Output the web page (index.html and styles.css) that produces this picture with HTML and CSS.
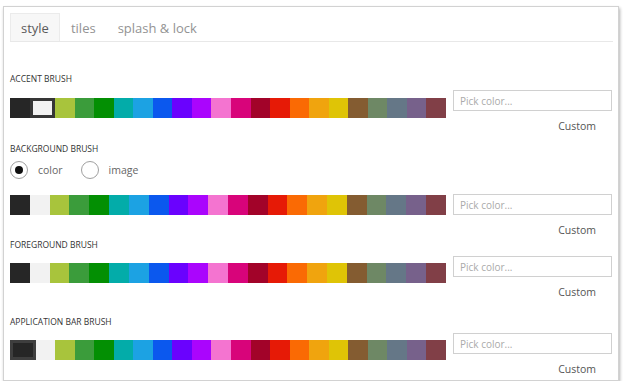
FILE: index.html
```html
<!DOCTYPE html>
<html lang="en">

<head>
    <meta charset="UTF-8">
    <meta name="viewport" content="width=device-width, initial-scale=1.0">
    <title>Theme settings</title>
    <link rel="stylesheet" href="styles.css">
</head>

<body>
    <div class="panel">
        <div class="tabs">
            <div class="tab active">style</div>
            <div class="tab">tiles</div>
            <div class="tab">splash &amp; lock</div>
        </div>

        <!-- accent -->
        <div class="brush" id="accent">
            <div class="brush-label">Accent brush</div>
            <div class="brush-row">
                <div class="swatches">
                    <div class="swatch c-black"></div><div class="swatch c-white selected"></div><div class="swatch c-lime"></div><div class="swatch c-green"></div>
                    <div class="swatch c-emerald"></div><div class="swatch c-teal"></div><div class="swatch c-cyan"></div><div class="swatch c-cobalt"></div>
                    <div class="swatch c-indigo"></div><div class="swatch c-violet"></div><div class="swatch c-pink"></div><div class="swatch c-magenta"></div>
                    <div class="swatch c-crimson"></div><div class="swatch c-red"></div><div class="swatch c-orange"></div><div class="swatch c-amber"></div>
                    <div class="swatch c-yellow"></div><div class="swatch c-brown"></div><div class="swatch c-olive"></div><div class="swatch c-steel"></div>
                    <div class="swatch c-mauve"></div><div class="swatch c-sienna"></div>
                </div>
                <div class="picker">
                    <input class="pick-input" type="text" placeholder="Pick color...">
                    <div class="custom">Custom</div>
                </div>
            </div>
        </div>

        <!-- background -->
        <div class="brush" id="background">
            <div class="brush-label">Background brush</div>
            <div class="radios">
                <div class="radio-item"><span class="radio checked"></span>color</div>
                <div class="radio-item"><span class="radio"></span>image</div>
            </div>
            <div class="brush-row">
                <div class="swatches">
                    <div class="swatch c-black"></div><div class="swatch c-white"></div><div class="swatch c-lime"></div><div class="swatch c-green"></div>
                    <div class="swatch c-emerald"></div><div class="swatch c-teal"></div><div class="swatch c-cyan"></div><div class="swatch c-cobalt"></div>
                    <div class="swatch c-indigo"></div><div class="swatch c-violet"></div><div class="swatch c-pink"></div><div class="swatch c-magenta"></div>
                    <div class="swatch c-crimson"></div><div class="swatch c-red"></div><div class="swatch c-orange"></div><div class="swatch c-amber"></div>
                    <div class="swatch c-yellow"></div><div class="swatch c-brown"></div><div class="swatch c-olive"></div><div class="swatch c-steel"></div>
                    <div class="swatch c-mauve"></div><div class="swatch c-sienna"></div>
                </div>
                <div class="picker">
                    <input class="pick-input" type="text" placeholder="Pick color...">
                    <div class="custom">Custom</div>
                </div>
            </div>
        </div>

        <!-- foreground -->
        <div class="brush" id="foreground">
            <div class="brush-label">Foreground brush</div>
            <div class="brush-row">
                <div class="swatches">
                    <div class="swatch c-black"></div><div class="swatch c-white"></div><div class="swatch c-lime"></div><div class="swatch c-green"></div>
                    <div class="swatch c-emerald"></div><div class="swatch c-teal"></div><div class="swatch c-cyan"></div><div class="swatch c-cobalt"></div>
                    <div class="swatch c-indigo"></div><div class="swatch c-violet"></div><div class="swatch c-pink"></div><div class="swatch c-magenta"></div>
                    <div class="swatch c-crimson"></div><div class="swatch c-red"></div><div class="swatch c-orange"></div><div class="swatch c-amber"></div>
                    <div class="swatch c-yellow"></div><div class="swatch c-brown"></div><div class="swatch c-olive"></div><div class="swatch c-steel"></div>
                    <div class="swatch c-mauve"></div><div class="swatch c-sienna"></div>
                </div>
                <div class="picker">
                    <input class="pick-input" type="text" placeholder="Pick color...">
                    <div class="custom">Custom</div>
                </div>
            </div>
        </div>

        <!-- application bar -->
        <div class="brush" id="appbar">
            <div class="brush-label">Application bar brush</div>
            <div class="brush-row">
                <div class="swatches">
                    <div class="swatch c-black selected"></div><div class="swatch c-white"></div><div class="swatch c-lime"></div><div class="swatch c-green"></div>
                    <div class="swatch c-emerald"></div><div class="swatch c-teal"></div><div class="swatch c-cyan"></div><div class="swatch c-cobalt"></div>
                    <div class="swatch c-indigo"></div><div class="swatch c-violet"></div><div class="swatch c-pink"></div><div class="swatch c-magenta"></div>
                    <div class="swatch c-crimson"></div><div class="swatch c-red"></div><div class="swatch c-orange"></div><div class="swatch c-amber"></div>
                    <div class="swatch c-yellow"></div><div class="swatch c-brown"></div><div class="swatch c-olive"></div><div class="swatch c-steel"></div>
                    <div class="swatch c-mauve"></div><div class="swatch c-sienna"></div>
                </div>
                <div class="picker">
                    <input class="pick-input" type="text" placeholder="Pick color...">
                    <div class="custom">Custom</div>
                </div>
            </div>
        </div>
    </div>
</body>

</html>
```

FILE: styles.css
```css
body {
    margin: 0;
    padding: 0;
    background: #fff;
    font-family: "Open Sans", "Noto Sans", sans-serif;
}

.panel {
    box-sizing: border-box;
    width: 616px;
    height: 375px;
    margin: 6px 0 0 3px;
    padding: 6px;
    border: 1px solid #d2d2d2;
    box-shadow: 1px 2px 3px rgba(0, 0, 0, 0.3);
    background: #fff;
}

.tabs {
    display: flex;
    height: 28px;
    border-bottom: 1px solid #e8e8e8;
    margin-right: -1px;
}

.tab {
    padding: 0 10px;
    line-height: 28px;
    font-size: 13px;
    color: #939393;
    border: 1px solid transparent;
    border-bottom: none;
}

.tab.active {
    color: #5a5a5a;
    background: #f7f7f7;
    border-color: #ebebeb;
}

.brush-label {
    height: 12px;
    line-height: 12px;
    font-size: 8.5px;
    text-transform: uppercase;
    color: #333;
    margin-bottom: 5px;
}

#accent {
    margin-top: 31px;
}

#background {
    margin-top: 10px;
}

#foreground {
    margin-top: 2px;
}

#appbar {
    margin-top: 17px;
}

.brush-row {
    display: flex;
    align-items: flex-start;
    gap: 7px;
}

.swatches {
    display: flex;
    width: 436px;
    height: 20px;
    margin-top: 7px;
}

#accent .swatches {
    margin-top: 8px;
}

#background .swatches {
    margin-top: 1px;
}

.swatch {
    flex: 1;
    box-sizing: border-box;
}

.swatch.selected {
    border: 3px solid #363636;
}

.c-black.selected {
    border-color: #3e3e3e;
}

.picker {
    flex: 1;
}

.pick-input {
    box-sizing: border-box;
    display: block;
    width: 100%;
    height: 21px;
    margin: 0;
    padding: 0 6px;
    border: 1px solid #d0d0d0;
    font-family: "Open Sans", "Noto Sans", sans-serif;
    font-size: 10px;
    color: #333;
    outline: none;
}

.pick-input::placeholder {
    color: #aaa;
}

.custom {
    margin-top: 8px;
    padding-right: 16px;
    text-align: right;
    line-height: 14px;
    font-size: 10.5px;
    color: #555;
}

/* radios */
.radios {
    display: flex;
    gap: 18px;
    height: 18px;
    margin: 6px 0 15px;
}

.radio-item {
    display: flex;
    align-items: center;
    gap: 10px;
    font-size: 10.5px;
    color: #666;
}

.radio {
    box-sizing: border-box;
    display: flex;
    justify-content: center;
    align-items: center;
    width: 18px;
    height: 18px;
    border: 1.5px solid #a0a0a0;
    border-radius: 50%;
}

.radio.checked::after {
    content: "";
    width: 8px;
    height: 8px;
    border-radius: 50%;
    background: #111;
}

/* palette */
.c-black { background: #262626; }
.c-white { background: #f2f2f2; }
.c-lime { background: #a8c43c; }
.c-green { background: #3b9c3b; }
.c-emerald { background: #038f03; }
.c-teal { background: #03aca9; }
.c-cyan { background: #1ca2e3; }
.c-cobalt { background: #0b58ee; }
.c-indigo { background: #6a02fe; }
.c-violet { background: #aa05fd; }
.c-pink { background: #f474d0; }
.c-magenta { background: #d8047a; }
.c-crimson { background: #a20329; }
.c-red { background: #e61a06; }
.c-orange { background: #fa6a04; }
.c-amber { background: #f0a40e; }
.c-yellow { background: #dfc406; }
.c-brown { background: #845c31; }
.c-olive { background: #6e8865; }
.c-steel { background: #657787; }
.c-mauve { background: #77618b; }
.c-sienna { background: #813f47; }
```
